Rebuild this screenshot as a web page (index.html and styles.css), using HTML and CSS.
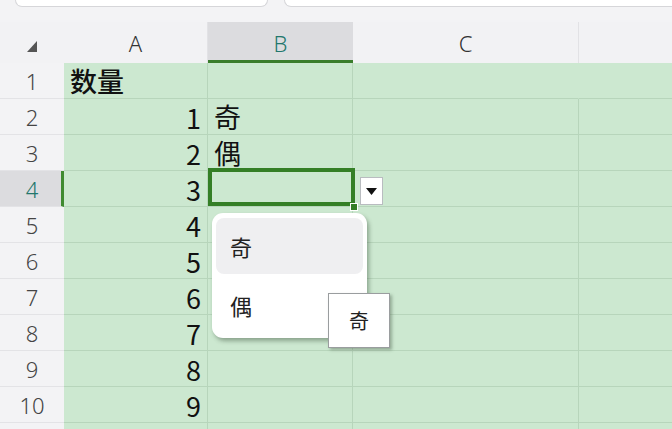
FILE: index.html
```html
<!DOCTYPE html>
<html lang="zh-CN">
<head>
<meta charset="utf-8">
<title>Sheet</title>
<link rel="stylesheet" href="styles.css">
</head>
<body>
<div class="top">
  <div class="box b1"></div>
  <div class="box b2"></div>
</div>
<div class="sheet">
  <div class="grid">
    <div class="hd corner"><svg width="12" height="13" viewBox="0 0 12 13"><path d="M11 1 L11 12 L1 12 Z" fill="#555"/></svg></div>
    <div class="hd col">A</div>
    <div class="hd col active">B</div>
    <div class="hd col">C</div>
    <div class="hd col last"></div>

    <div class="rh">1</div><div class="c a txt">数量</div><div class="c b"></div><div class="c cc nol"></div><div class="c d"></div>
    <div class="rh">2</div><div class="c a num">1</div><div class="c b txt">奇</div><div class="c cc"></div><div class="c d"></div>
    <div class="rh">3</div><div class="c a num">2</div><div class="c b txt">偶</div><div class="c cc"></div><div class="c d"></div>
    <div class="rh act">4</div><div class="c a num">3</div><div class="c b sel"></div><div class="c cc"></div><div class="c d"></div>
    <div class="rh">5</div><div class="c a num">4</div><div class="c b"></div><div class="c cc"></div><div class="c d"></div>
    <div class="rh">6</div><div class="c a num">5</div><div class="c b"></div><div class="c cc"></div><div class="c d"></div>
    <div class="rh">7</div><div class="c a num">6</div><div class="c b"></div><div class="c cc"></div><div class="c d"></div>
    <div class="rh">8</div><div class="c a num">7</div><div class="c b"></div><div class="c cc"></div><div class="c d"></div>
    <div class="rh">9</div><div class="c a num">8</div><div class="c b"></div><div class="c cc"></div><div class="c d"></div>
    <div class="rh">10</div><div class="c a num">9</div><div class="c b"></div><div class="c cc"></div><div class="c d"></div>
    <div class="rh"></div><div class="c a"></div><div class="c b"></div><div class="c cc"></div><div class="c d"></div>
  </div>

  <div class="dd-btn"><svg width="11" height="7" viewBox="0 0 11 7"><path d="M0 0 L11 0 L5.5 7 Z" fill="#111"/></svg></div>

  <div class="menu">
    <div class="item hover">奇</div>
    <div class="item">偶</div>
  </div>

  <div class="tip">奇</div>
</div>
</body>
</html>
```

FILE: styles.css
```css
html, body {
  margin: 0;
  padding: 0;
}
body {
  width: 672px;
  height: 429px;
  overflow: hidden;
  background: #f3f3f5;
  font-family: "Noto Sans", "Noto Sans CJK SC", sans-serif;
}
.top {
  height: 22px;
  display: flex;
  gap: 16px;
  padding-left: 15px;
  box-sizing: border-box;
}
.box {
  height: 6px;
  background: #fff;
  border: 1px solid #d6d6d9;
  border-top: none;
  border-radius: 0 0 9px 9px;
}
.b1 { width: 251px; }
.b2 { flex: 1; border-right: none; border-radius: 0 0 0 9px; }

.sheet {
  position: relative;
}
.grid {
  display: grid;
  grid-template-columns: 64px 144px 145px 226px 93px;
  grid-template-rows: 41px repeat(11, 36px);
}
.hd {
  background: #f2f2f4;
  display: flex;
  align-items: center;
  justify-content: center;
  color: #333;
  font-size: 22px;
  font-weight: 300;
  box-sizing: border-box;
}
.corner svg {
  margin-top: 8px;
}
.col {
  border-right: 1px solid #e2e2e5;
}
.col.active {
  background: #dcdcdf;
  color: #22776c;
  border-bottom: 3px solid #3a7d2c;
  border-right: none;
  padding-top: 3px;
}
.col.last { border-right: none; }

.rh {
  background: #f3f3f5;
  border-bottom: 1px solid #e3e3e6;
  display: flex;
  align-items: center;
  justify-content: center;
  color: #444;
  font-size: 22px;
  font-weight: 300;
  box-sizing: border-box;
}
.rh.act {
  background: #dcdcdf;
  color: #22776c;
  border-right: 3px solid #3f8a30;
  padding-left: 3px;
}

.c {
  background: #cce8d0;
  border-right: 1px solid #b7d5bb;
  border-bottom: 1px solid #b7d5bb;
  box-sizing: border-box;
  color: #111;
}
.c.nol { border-right-color: #cce8d0; }
.c.d { border-right: none; }
.txt {
  font-family: "Noto Sans CJK SC", sans-serif;
  font-size: 27px;
  font-weight: 500;
  line-height: 36px;
  padding-left: 6px;
}
.b.txt { font-weight: 400; padding-left: 6px; }
.num {
  font-family: "Noto Sans CJK SC", sans-serif;
  font-size: 27px;
  line-height: 38px;
  text-align: right;
  padding-right: 6px;
}

.sel {
  position: relative;
}
.sel::after {
  content: "";
  position: absolute;
  left: 0;
  top: -3px;
  right: -3px;
  bottom: 0;
  border: 4px solid #347f26;
}
.sel::before {
  content: "";
  position: absolute;
  right: -6px;
  bottom: -5px;
  width: 6px;
  height: 6px;
  background: #347f26;
  border: 1px solid #fff;
  z-index: 2;
}

.dd-btn {
  position: absolute;
  left: 360px;
  top: 155px;
  width: 23px;
  height: 28px;
  box-sizing: border-box;
  background: #fff;
  border: 1px solid #b9bcc0;
  display: flex;
  align-items: center;
  justify-content: center;
}

.menu {
  position: absolute;
  left: 212px;
  top: 191px;
  width: 155px;
  height: 125px;
  box-sizing: border-box;
  background: #fff;
  border-radius: 11px;
  box-shadow: 2px 3px 4px rgba(60, 80, 60, 0.45);
  padding: 5px 4px;
  display: flex;
  flex-direction: column;
  gap: 3px;
}
.item {
  height: 56px;
  border-radius: 8px;
  font-family: "Noto Sans CJK SC", sans-serif;
  font-size: 22px;
  color: #222;
  display: flex;
  align-items: center;
  padding-left: 14px;
}
.item.hover { background: #efeff1; }

.tip {
  position: absolute;
  left: 328px;
  top: 271px;
  width: 62px;
  height: 55px;
  box-sizing: border-box;
  background: #fff;
  border: 1px solid #9a9d9f;
  box-shadow: 2px 2px 3px rgba(60, 80, 60, 0.4);
  font-family: "Noto Sans CJK SC", sans-serif;
  font-size: 20px;
  color: #222;
  display: flex;
  align-items: center;
  justify-content: center;
}
```
